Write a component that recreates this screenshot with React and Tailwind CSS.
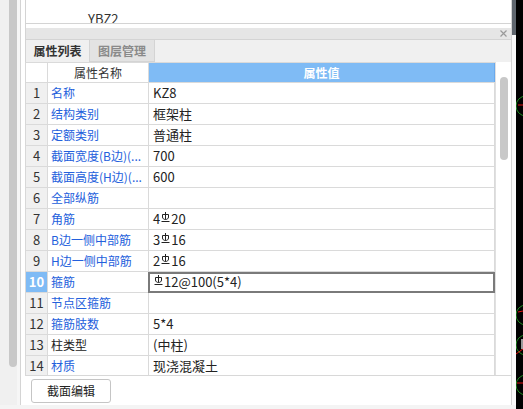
import React from 'react'

// HRB400 rebar glyph (三级钢)
const Rebar = () => (
  <svg width="9" height="11" viewBox="0 0 9 11" className="inline-block align-baseline mx-[1px] -translate-y-[1px]" fill="none" stroke="currentColor" strokeWidth="1">
    <path d="M4.5 0V7.5" />
    <path d="M1.5 2.5H7.5V5C7.5 6.5 6.2 7.5 4.5 7.5C2.8 7.5 1.5 6.5 1.5 5Z" />
    <path d="M0.5 9.5H8.5" />
  </svg>
)

const rows = [
  { n: 1, name: '名称', value: 'KZ8' },
  { n: 2, name: '结构类别', value: '框架柱' },
  { n: 3, name: '定额类别', value: '普通柱' },
  { n: 4, name: '截面宽度(B边)(...', value: '700' },
  { n: 5, name: '截面高度(H边)(...', value: '600' },
  { n: 6, name: '全部纵筋', value: '' },
  { n: 7, name: '角筋', value: <>4<Rebar />20</> },
  { n: 8, name: 'B边一侧中部筋', value: <>3<Rebar />16</> },
  { n: 9, name: 'H边一侧中部筋', value: <>2<Rebar />16</> },
  { n: 10, name: '箍筋', value: <><Rebar />12@100(5*4)</>, editing: true },
  { n: 11, name: '节点区箍筋', value: '' },
  { n: 12, name: '箍筋肢数', value: '5*4' },
  { n: 13, name: '柱类型', value: '(中柱)', plain: true },
  { n: 14, name: '材质', value: '现浇混凝土' },
]

function Row({ row }) {
  return (
    <div className="flex h-[21px] shrink-0 border-b border-[#dadada]">
      <div className={`w-[22px] shrink-0 border-r border-[#dadada] text-center leading-[20px] text-[13px] ${row.editing ? 'bg-[#7fbbf5] text-white font-bold' : 'bg-[#f0f0f0] text-[#333]'}`}>
        {row.n}
      </div>
      <div className={`w-[101px] shrink-0 border-r border-[#dadada] pl-[3px] leading-[20px] whitespace-nowrap overflow-hidden ${row.plain ? 'text-[#222]' : 'text-[#2360dc]'}`}>
        {row.name}
      </div>
      <div className="relative flex-1 border-r border-[#dadada] pl-[4px] leading-[20px] text-[13px] text-[#222] whitespace-nowrap">
        {row.value}
        {row.editing && (
          <div className="absolute -left-px top-0 -right-px -bottom-px border-2 border-[#7a7a7a]" />
        )}
      </div>
    </div>
  )
}

export default function App() {
  return (
    <div className="flex w-[523px] h-[409px] overflow-hidden bg-white text-[12px] text-[#222] font-['Noto_Sans_CJK_SC',sans-serif]">
      <div className="flex flex-col w-[516px]">
        <div className="flex h-[405px]">
          {/* left scroller */}
          <div className="flex w-[20px] bg-[#f0f0f0]">
            <div className="ml-[9px] w-[8px] h-[367px] rounded-b-full bg-[#c8c8c8]" />
            <div className="flex-1 bg-[#f6f6f6]" />
          </div>

          {/* properties panel */}
          <div className="flex flex-col w-[492px] border-x border-[#d4d4d4] bg-white pl-[4px]">
            <div className="h-[24px] shrink-0 overflow-hidden border-l border-b border-[#d4d4d4] pl-[62px] pt-[11px] text-[13px] leading-[16px] text-[#333]">
              YBZ2
            </div>
            <div className="h-[4px] shrink-0 border-l border-[#d4d4d4]" />

            <div className="flex h-[12px] shrink-0 items-center justify-end border-l border-b border-[#d4d4d4] bg-[#e6e6e6] pr-[4px]">
              <svg width="7" height="7" viewBox="0 0 7 7" stroke="#9a9a9a" strokeWidth="1.2">
                <path d="M0.5 0.5L6.5 6.5M6.5 0.5L0.5 6.5" />
              </svg>
            </div>

            <div className="flex h-[22px] shrink-0 border-l border-[#d4d4d4] bg-[#f0f0f0]">
              <div className="w-[64px] border-r border-[#d4d4d4] text-center font-bold leading-[22px] text-[#333]">
                属性列表
              </div>
              <div className="w-[65px] border-r border-b border-[#d4d4d4] bg-[#e3e3e3] text-center font-bold leading-[21px] text-[#8a8a8a]">
                图层管理
              </div>
            </div>

            <div className="flex h-[314px] shrink-0 border-l border-b border-[#d8d8d8]">
              <div className="flex w-[469px] flex-col overflow-hidden">
                <div className="flex h-[21px] shrink-0 border-t border-b border-[#dadada]">
                  <div className="w-[22px] shrink-0 border-r border-[#dadada]" />
                  <div className="w-[101px] shrink-0 border-r border-[#dadada] text-center leading-[19px] text-[#333]">
                    属性名称
                  </div>
                  <div className="flex-1 border-r border-[#6aa9ec] bg-[#7fbbf5] text-center font-bold leading-[19px] text-white">
                    属性值
                  </div>
                </div>
                {rows.map(r => <Row key={r.n} row={r} />)}
              </div>
              <div className="flex w-[16px] justify-center border-l border-[#e0e0e0] pt-[15px]">
                <div className="h-[83px] w-[8px] rounded-full bg-[#c8c8c8]" />
              </div>
            </div>

            <div className="flex-1 pl-[6px] pt-[3px]">
              <button className="h-[24px] w-[80px] rounded-[3px] border border-[#c5c5c5] bg-white text-[12px] text-[#222]">
                截面编辑
              </button>
            </div>
          </div>

          <div className="flex w-[4px] flex-col bg-[#fafafa]">
            <div className="h-[35px] bg-[#5f666e]" />
          </div>
        </div>
        <div className="h-[4px] bg-[#f4f4f4]" />
      </div>

      {/* drawing canvas edge */}
      <div className="w-[7px] bg-black">
        <svg width="7" height="409" viewBox="0 0 7 409" fill="none">
          <circle cx="10" cy="106" r="10" stroke="#1f8a1f" />
          <path d="M2 105H7" stroke="#e01010" />
          <circle cx="10" cy="315" r="10" stroke="#1f8a1f" />
          <path d="M2 312L7 311" stroke="#e01010" />
          <circle cx="10" cy="345" r="10" stroke="#1f8a1f" />
          <path d="M0 354L7 349" stroke="#e01010" />
          <rect x="5" y="339" width="2" height="10" fill="#9a9a9a" />
          <circle cx="10" cy="385" r="10" stroke="#1f8a1f" />
          <path d="M1 383H7" stroke="#e01010" />
        </svg>
      </div>
    </div>
  )
}
